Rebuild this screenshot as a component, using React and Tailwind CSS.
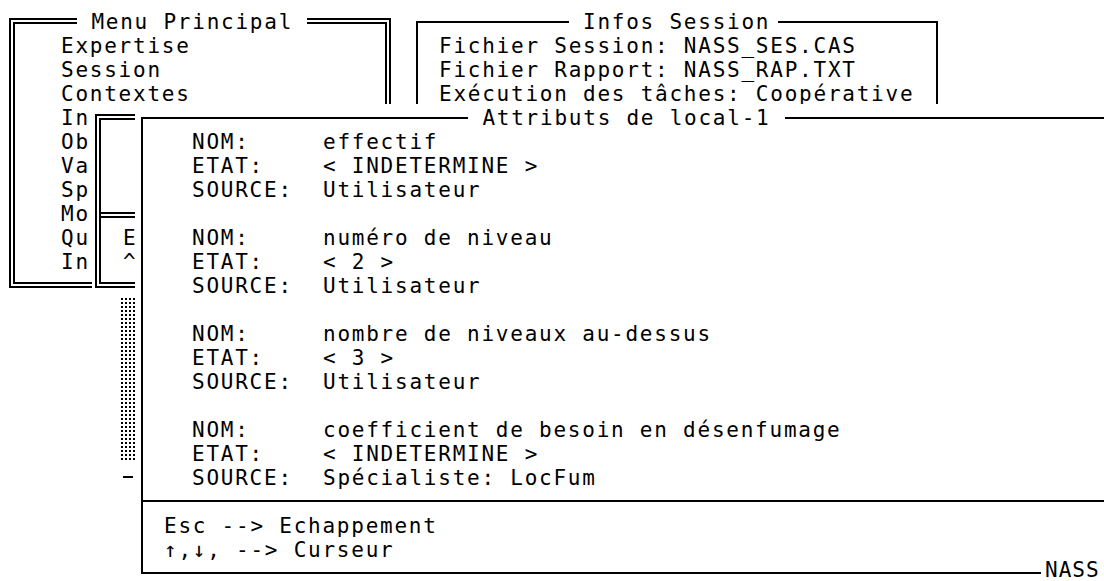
import React from 'react';

const menuItems = ['Expertise', 'Session', 'Contextes', 'In', 'Ob', 'Va', 'Sp', 'Mo', 'Qu', 'In'];

const infos = [
  'Fichier Session: NASS_SES.CAS',
  'Fichier Rapport: NASS_RAP.TXT',
  'Exécution des tâches: Coopérative',
];

const attributs = [
  { nom: 'effectif', etat: '< INDETERMINE >', source: 'Utilisateur' },
  { nom: 'numéro de niveau', etat: '< 2 >', source: 'Utilisateur' },
  { nom: 'nombre de niveaux au-dessus', etat: '< 3 >', source: 'Utilisateur' },
  { nom: 'coefficient de besoin en désenfumage', etat: '< INDETERMINE >', source: 'Spécialiste: LocFum' },
];

const Line = ({ children }) => <div className="h-[24px] whitespace-pre">{children}</div>;

const Field = ({ label, value }) => (
  <div className="flex h-[24px] whitespace-pre">
    <span className="w-[131px] shrink-0">{label}</span>
    <span>{value}</span>
  </div>
);

export default function App() {
  return (
    <div className="relative h-[581px] w-[1104px] overflow-hidden bg-white font-['DejaVu_Sans_Mono',monospace] text-[21px] leading-[24px] tracking-[1.76px] text-black">
      {/* Menu principal */}
      <div className="absolute left-[4px] top-[8px] bg-white pb-[8px] pl-[5px] pr-[5px] pt-[10px]">
        <div className="relative h-[270px] w-[382px] border-[6px] border-double border-black">
          <span className="absolute left-[62px] top-[-14px] whitespace-pre bg-white"> Menu Principal </span>
          <div className="flex flex-col pl-[46px] pt-[10px]">
            {menuItems.map((item, i) => (
              <Line key={i}>{item}</Line>
            ))}
          </div>
        </div>
      </div>

      {/* Infos session */}
      <div className="absolute left-[411px] top-[8px] bg-white pl-[5px] pr-[9px] pt-[13px]">
        <div className="relative h-[98px] w-[522px] border-2 border-black">
          <span className="absolute left-[151px] top-[-13px] bg-white pl-[14px] pr-[8px]">Infos Session</span>
          <div className="flex flex-col pl-[21px] pt-[11px]">
            {infos.map((t) => (
              <Line key={t}>{t}</Line>
            ))}
          </div>
        </div>
      </div>

      {/* fenêtre derrière les attributs */}
      <div className="absolute left-[92px] top-[104px] h-[192px] w-[300px] bg-white pl-[3px] pt-[10px]">
        <div className="flex h-[174px] w-[290px] flex-col border-[6px] border-double border-black">
          <div className="h-[92px]" />
          <div className="h-[6px] border-t-[6px] border-double border-black" />
          <div className="flex flex-col pl-[22px] pt-[8px]">
            <Line>E</Line>
            <Line>^</Line>
          </div>
        </div>
      </div>

      {/* ascenseur */}
      <div className="absolute left-[121px] top-[298px] h-[164px] w-[15px] bg-[image:conic-gradient(at_2px_2px,transparent_75%,#000_0)] bg-[length:4px_4px]" />
      <div className="absolute left-[123px] top-[476px] h-[2px] w-[10px] bg-black" />

      {/* Attributs de local-1 */}
      <div className="absolute left-[135px] top-[104px] h-[480px] w-[1000px] bg-white pl-[6px] pt-[13px]">
        <div className="relative flex w-[1000px] flex-col border-2 border-black">
          <span className="absolute left-[325px] top-[-13px] whitespace-pre bg-white"> Attributs de local-1 </span>
          <div className="flex flex-col pb-[10px] pl-[49px] pt-[11px]">
            {attributs.map((a, i) => (
              <div key={a.nom} className="flex flex-col">
                <Field label="NOM:" value={a.nom} />
                <Field label="ETAT:" value={a.etat} />
                <Field label="SOURCE:" value={a.source} />
                {i < attributs.length - 1 && <Line> </Line>}
              </div>
            ))}
          </div>
          <div className="border-t-2 border-black" />
          <div className="flex flex-col pb-[10px] pl-[21px] pt-[12px]">
            <Line>Esc --&gt; Echappement</Line>
            <Line>↑,↓, --&gt; Curseur</Line>
          </div>
        </div>
      </div>

      <div className="absolute left-[1041px] top-[560px] h-[20px] w-[63px] bg-white pl-[4px] leading-[20px] tracking-[1px]">NASS</div>
    </div>
  );
}
